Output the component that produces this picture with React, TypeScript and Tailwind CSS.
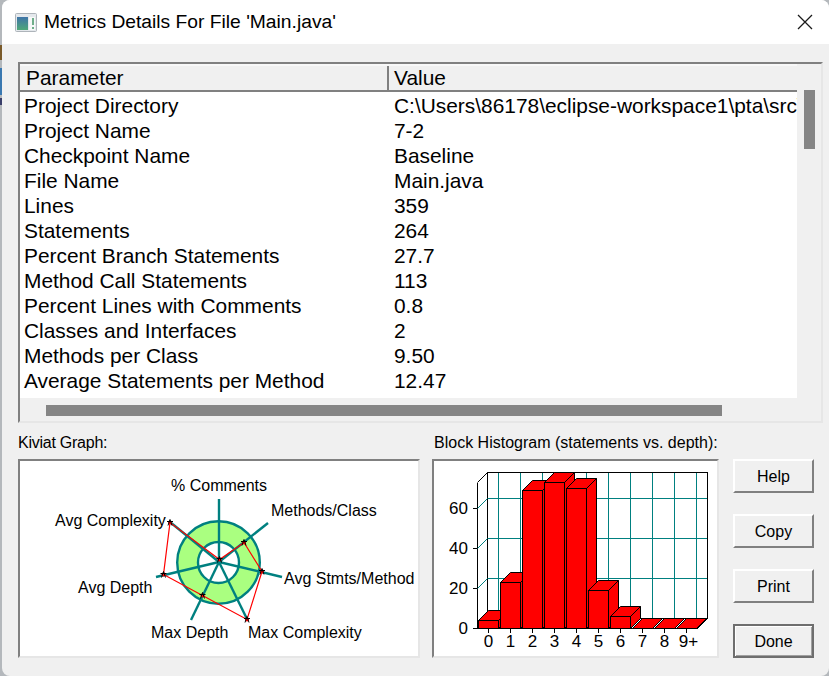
const rows = [
  ["Project Directory", "C:\\Users\\86178\\eclipse-workspace1\\pta\\src\\Main.java"],
  ["Project Name", "7-2"],
  ["Checkpoint Name", "Baseline"],
  ["File Name", "Main.java"],
  ["Lines", "359"],
  ["Statements", "264"],
  ["Percent Branch Statements", "27.7"],
  ["Method Call Statements", "113"],
  ["Percent Lines with Comments", "0.8"],
  ["Classes and Interfaces", "2"],
  ["Methods per Class", "9.50"],
  ["Average Statements per Method", "12.47"],
];

const spokes = [
  [219, 499],
  [268, 523],
  [282, 577],
  [247, 619],
  [191, 620],
  [156, 577],
  [170, 522],
];

const kiviatPoints = [
  [219.5, 559.5],
  [244, 542.5],
  [262, 571.5],
  [247, 619.5],
  [202.5, 595.5],
  [163.5, 574.5],
  [170, 522.5],
];

const kiviatLabels = [
  { text: "% Comments", x: 171, y: 491 },
  { text: "Methods/Class", x: 271, y: 516 },
  { text: "Avg Stmts/Method", x: 284, y: 584 },
  { text: "Max Complexity", x: 248, y: 638 },
  { text: "Max Depth", x: 151, y: 638 },
  { text: "Avg Depth", x: 78, y: 593 },
  { text: "Avg Complexity", x: 55, y: 526 },
];

const bars = [620.5, 582.5, 490.5, 482.5, 488.5, 590.5, 616.5, 628.5, 628.5, 628.5];
const xLabels = ["0", "1", "2", "3", "4", "5", "6", "7", "8", "9+"];
const gridX = [498.5, 520.5, 542.5, 564.5, 586.5, 608.5, 630.5, 652.5, 674.5, 696.5];

const KiviatGraph = () => (
  <svg viewBox="20 461 398 195" className="block w-[398px] h-[195px] font-['Liberation_Sans',sans-serif]">
    <circle cx="218.5" cy="562.5" r="31" fill="none" stroke="#aaff80" strokeWidth="21" />
    <circle cx="218.5" cy="562.5" r="41.3" fill="none" stroke="#008080" strokeWidth="2.4" />
    <circle cx="218.5" cy="562.5" r="20.5" fill="none" stroke="#008080" strokeWidth="2.4" />
    {spokes.map(([x, y]) => (
      <line key={`${x}-${y}`} x1="219" y1="562" x2={x} y2={y} stroke="#008080" strokeWidth="2.4" />
    ))}
    <polygon
      points={kiviatPoints.map(([x, y]) => `${x},${y}`).join(" ")}
      fill="none"
      stroke="#ff0000"
      strokeWidth="1.2"
    />
    {kiviatPoints.map(([x, y]) => (
      <g key={`${x}-${y}`}>
        <circle cx={x} cy={y} r="2" fill="#ff0000" />
        <path
          d={`M${x - 3} ${y - 1}H${x + 3}M${x - 2} ${y + 3}L${x} ${y - 3}L${x + 2} ${y + 3}`}
          stroke="#000"
          strokeWidth="1"
          fill="none"
        />
      </g>
    ))}
    {kiviatLabels.map((l) => (
      <text key={l.text} x={l.x} y={l.y} fontSize="16" fill="#000">
        {l.text}
      </text>
    ))}
  </svg>
);

const Histogram = () => (
  <svg viewBox="434 461 283 195" className="block w-[283px] h-[195px] font-['Liberation_Sans',sans-serif]">
    <g shapeRendering="crispEdges">
      {gridX.map((x) => (
        <line key={x} x1={x} y1="472.5" x2={x} y2="618.5" stroke="#008080" strokeWidth="1" />
      ))}
      {[498.5, 538.5, 578.5].map((y) => (
        <line key={y} x1="487.5" y1={y} x2="707.5" y2={y} stroke="#008080" strokeWidth="1" />
      ))}
      <rect x="487.5" y="472.5" width="220" height="146" fill="none" stroke="#000" />
      <line x1="477.5" y1="482.5" x2="477.5" y2="628.5" stroke="#000" />
      <line x1="473" y1="628.5" x2="697.5" y2="628.5" stroke="#000" />
      {[508.5, 548.5, 588.5].map((y) => (
        <line key={y} x1="473" y1={y} x2="477.5" y2={y} stroke="#000" />
      ))}
      {gridX.map((x) => (
        <line key={x} x1={x - 10} y1="629" x2={x - 10} y2="633" stroke="#000" />
      ))}
    </g>
    {[498.5, 538.5, 578.5].map((y) => (
      <line key={y} x1="477.5" y1={y + 10} x2="487.5" y2={y} stroke="#008080" strokeWidth="1" />
    ))}
    <line x1="477.5" y1="482.5" x2="487.5" y2="472.5" stroke="#000" />
    <line x1="697.5" y1="628.5" x2="707.5" y2="618.5" stroke="#000" />
    {bars.map((top, i) => {
      const x = 478.5 + i * 22;
      const w = 20;
      const d = 10;
      const t = top - d < 472.5 ? 472.5 : top - d;
      const dx = top - t;
      return (
        <g key={i} stroke="#000" strokeWidth="1" fill="#ff0000" strokeLinejoin="miter">
          <polygon points={`${x + w},${top} ${x + w + dx},${t} ${x + w + dx},${628.5 - dx} ${x + w},628.5`} />
          <polygon points={`${x},${top} ${x + dx},${t} ${x + w + dx},${t} ${x + w},${top}`} />
          {top < 628.5 && <rect x={x} y={top} width={w} height={628.5 - top} />}
        </g>
      );
    })}
    {["60", "40", "20", "0"].map((t, i) => (
      <text key={t} x="468" y={514 + i * 40} textAnchor="end" fontSize="17" fill="#000">
        {t}
      </text>
    ))}
    {xLabels.map((t, i) => (
      <text key={t} x={i === 9 ? 688.5 : 488.5 + i * 22} y="647" textAnchor="middle" fontSize="17" fill="#000">
        {t}
      </text>
    ))}
  </svg>
);

const DialogButton = ({ label, primary }: { label: string; primary?: boolean }) => (
  <button
    className={`w-[81px] h-[34px] flex items-center justify-center pt-[1px] text-[16px] text-black bg-[#f0f0f0] border-2 ${
      primary
        ? "border-[#6e6e6e] shadow-[inset_1px_1px_0_#fff,inset_-1px_-1px_0_#a0a0a0]"
        : "border-t-white border-l-white border-r-[#808080] border-b-[#808080]"
    }`}
  >
    {label}
  </button>
);

export default function App() {
  return (
    <div className="w-[829px] h-[676px] flex bg-[#b4b8bc] font-['Liberation_Sans',sans-serif] text-black overflow-hidden">
      {/* Desktop showing behind the window edge */}
      <div className="w-[2px] shrink-0 flex flex-col">
        <div className="h-[45px]"></div>
        <div className="h-[15px] bg-[#7a5a2a]"></div>
        <div className="h-[8px]"></div>
        <div className="h-[27px] bg-[#3a78b0]"></div>
        <div className="h-[3px]"></div>
        <div className="h-[7px] bg-[#3a3f6a]"></div>
      </div>
      <div className="w-[827px] h-[676px] rounded-[8px] overflow-hidden flex flex-col bg-[#f0f0f0]">
        {/* Title bar */}
        <div className="h-[44px] shrink-0 bg-white flex items-center justify-between pl-[13px] pr-[16px]">
          <div className="flex items-center gap-[7px]">
            <svg width="22" height="19" viewBox="0 0 22 19">
              <defs>
                <linearGradient id="titleIcon" x1="0" y1="0" x2="0" y2="1">
                  <stop offset="0" stopColor="#3f74a8" />
                  <stop offset="1" stopColor="#4fa878" />
                </linearGradient>
              </defs>
              <rect x="0.5" y="0.5" width="21" height="18" rx="1" fill="#e4e8ec" stroke="#aeb4ba" />
              <rect x="2" y="4" width="11" height="13" fill="url(#titleIcon)" />
              <rect x="14" y="4" width="6" height="13" fill="#f6f8f8" />
              <rect x="17" y="5" width="2" height="7" fill="#6fae8a" />
              <rect x="17" y="14" width="2" height="2" fill="#6fae8a" />
            </svg>
            <span className="text-[19.25px] leading-none">Metrics Details For File 'Main.java'</span>
          </div>
          <svg width="16" height="16" viewBox="0 0 16 16">
            <path d="M1 1L15 15M15 1L1 15" stroke="#1a1a1a" strokeWidth="1.3" fill="none" />
          </svg>
        </div>

        <div className="flex-1 px-[16px] pt-[18px]">
          {/* Metrics table */}
          <div className="w-[805px] h-[361px] border-2 border-t-[#808080] border-l-[#808080] border-r-[#e6e6e6] border-b-[#e6e6e6] flex">
            <div className="w-[777px] flex flex-col">
              <div className="h-[28px] grid grid-cols-[369px_1fr] bg-[#f0f0f0] border-t-2 border-t-[#f8f8f8] border-b-2 border-b-[#808080] text-[20.9px] leading-[24px]">
                <div className="pl-[6px] border-r-2 border-r-[#808080]">Parameter</div>
                <div className="pl-[5px]">Value</div>
              </div>
              <div className="bg-white h-[306px] pt-[1px] overflow-hidden">
                {rows.map(([name, value]) => (
                  <div key={name} className="h-[25px] grid grid-cols-[374px_1fr] text-[20.9px] leading-[25px] whitespace-nowrap">
                    <div className="pl-[4px]">{name}</div>
                    <div className="overflow-hidden">{value}</div>
                  </div>
                ))}
              </div>
              <div className="flex-1 pl-[26px] pt-[7px]">
                <div className="w-[676px] h-[11px] bg-[#858585]"></div>
              </div>
            </div>
            <div className="flex-1 pl-[7px] pt-[26px]">
              <div className="w-[11px] h-[59px] bg-[#858585]"></div>
            </div>
          </div>

          {/* Graphs and buttons */}
          <div className="mt-[10px] flex">
            <div className="w-[402px]">
              <div className="h-[26px] text-[16px] tracking-[-0.25px] leading-[19px]">Kiviat Graph:</div>
              <div className="w-[402px] h-[199px] border-2 border-t-[#808080] border-l-[#808080] border-r-[#e6e6e6] border-b-[#e6e6e6] bg-white">
                <KiviatGraph />
              </div>
            </div>
            <div className="w-[287px] ml-[12px]">
              <div className="h-[26px] text-[16px] leading-[19px] whitespace-nowrap pl-[2px]">
                Block Histogram (statements vs. depth):
              </div>
              <div className="w-[287px] h-[199px] border-2 border-t-[#808080] border-l-[#808080] border-r-[#e6e6e6] border-b-[#e6e6e6] bg-white">
                <Histogram />
              </div>
            </div>
            <div className="ml-[14px] pt-[26px] flex flex-col gap-[21px]">
              <DialogButton label="Help" />
              <DialogButton label="Copy" />
              <DialogButton label="Print" />
              <DialogButton label="Done" primary />
            </div>
          </div>
        </div>
      </div>
    </div>
  );
}
